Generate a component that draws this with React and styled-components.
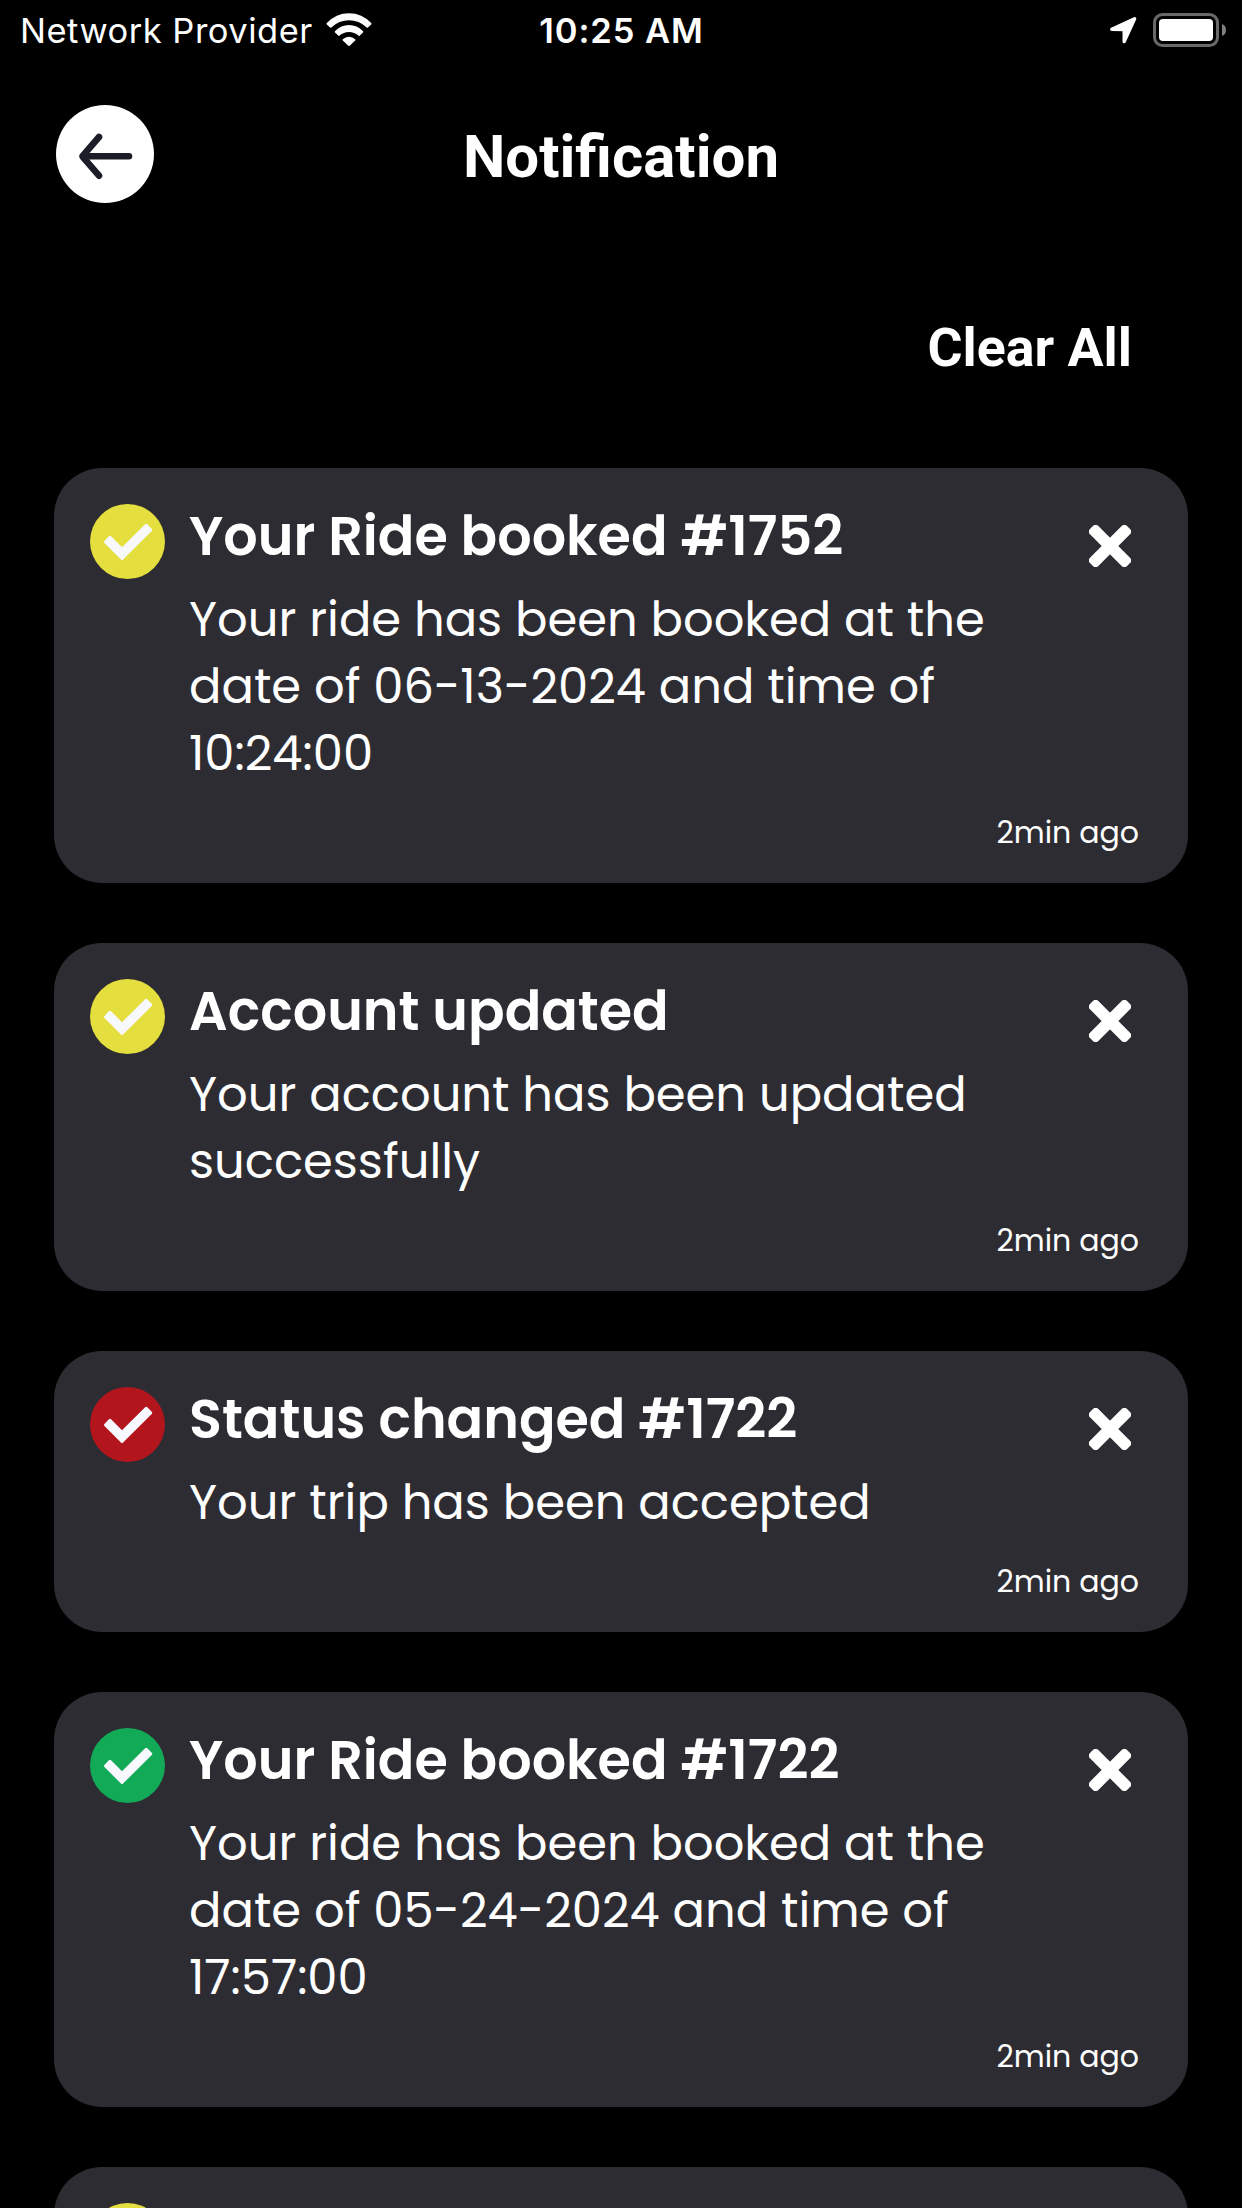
/**
 *
 * NotificationPage
 *
 */

import React from 'react';
import styled, { createGlobalStyle } from 'styled-components';

const GlobalStyle = createGlobalStyle`
  body {
    margin: 0;
    background: #000;
  }
`;

const Wrapper = styled.div`
  display: flex;
  flex-direction: column;
  width: 1242px;
  height: 2208px;
  overflow: hidden;
  background: #000;
  color: #fff;
  font-family: Poppins, Inter, sans-serif;
`;

const StatusBar = styled.div`
  display: grid;
  grid-template-columns: 1fr auto 1fr;
  grid-template-rows: 60px;
  align-items: center;
  flex: none;
  padding: 0 16px 0 20px;
  font-family: Inter, sans-serif;
  font-size: 34.5px;
  line-height: 50px;
`;

const Carrier = styled.div`
  display: flex;
  align-items: center;
  gap: 13px;
  letter-spacing: 0.5px;
`;

const CarrierName = styled.span`
  padding-top: 2px;
`;

const Clock = styled.div`
  padding: 2px 3px 0 0;
  font-weight: 600;
  letter-spacing: 0.9px;
`;

const StatusIcons = styled.div`
  display: flex;
  align-items: center;
  justify-content: flex-end;
  gap: 16px;
`;

const Header = styled.header`
  display: grid;
  grid-template-columns: 98px 1fr 98px;
  align-items: center;
  flex: none;
  margin-top: 45px;
  padding: 0 56px;
`;

const BackButton = styled.button`
  width: 98px;
  height: 98px;
  padding: 0;
  border: 0;
  border-radius: 50%;
  background: #fff;

  svg {
    display: block;
  }
`;

const PageTitle = styled.h1`
  margin: 0;
  padding-top: 5px;
  font-family: Roboto, sans-serif;
  font-size: 60px;
  font-weight: 700;
  line-height: 60px;
  text-align: center;
`;

const ClearAll = styled.button`
  align-self: flex-end;
  flex: none;
  margin: 115px 110px 0 0;
  padding: 0;
  border: 0;
  background: none;
  color: #fff;
  font-family: Roboto, sans-serif;
  font-size: 53.7px;
  font-weight: 700;
  line-height: 60px;
`;

const List = styled.div`
  display: flex;
  flex-direction: column;
  flex: none;
  gap: 60px;
  margin-top: 90px;
  padding: 0 54px;
`;

const Card = styled.article`
  display: flex;
  flex-direction: column;
  box-sizing: border-box;
  min-height: 281px;
  padding: 36px 49px 35px 36px;
  border-radius: 48px;
  background: #2e2c33;
`;

const CardRow = styled.div`
  display: flex;
  align-items: flex-start;
`;

const CardBody = styled.div`
  flex: 1;
  margin-left: 24px;
`;

const Badge = styled.div`
  width: 75px;
  height: 75px;
  border-radius: 50%;
  background: ${props => props.$color};

  svg {
    display: block;
  }
`;

const CardTitle = styled.h2`
  margin: 0;
  font-size: 54px;
  font-weight: 600;
  line-height: 65px;
`;

const Message = styled.p`
  max-width: 830px;
  margin: 17px 0 0;
  font-size: 48px;
  line-height: 67px;
`;

const CloseButton = styled.button`
  flex: none;
  margin: 21px 8px 0 0;
  padding: 0;
  border: 0;
  background: none;

  svg {
    display: block;
  }
`;

const Time = styled.time`
  align-self: flex-end;
  margin-top: 31px;
  font-size: 30px;
  line-height: 30px;
`;

const YELLOW = '#e4de3e';
const RED = '#b3151d';
const GREEN = '#12a957';

const notifications = [
  {
    id: 1,
    color: YELLOW,
    title: 'Your Ride booked #1752',
    message: 'Your ride has been booked at the date of 06-13-2024 and time of 10:24:00',
    time: '2min ago',
  },
  {
    id: 2,
    color: YELLOW,
    title: 'Account updated',
    message: 'Your account has been updated successfully',
    time: '2min ago',
  },
  {
    id: 3,
    color: RED,
    title: 'Status changed #1722',
    message: 'Your trip has been accepted',
    time: '2min ago',
  },
  {
    id: 4,
    color: GREEN,
    title: 'Your Ride booked #1722',
    message: 'Your ride has been booked at the date of 05-24-2024 and time of 17:57:00',
    time: '2min ago',
  },
  { id: 5, color: YELLOW },
];

const WifiIcon = () => (
  <svg width="46" height="34" viewBox="0 0 46 34" fill="#fff">
    <path d="M0.6 10.2Q10 0.3 23 0.3T45.4 10.2Q45.8 10.9 45.2 11.5L41.9 14.6Q41.3 15 40.7 14.5Q33 7.3 23 7.3T5.3 14.5Q4.7 15 4.1 14.6L0.8 11.5Q0.2 10.9 0.6 10.2Z" />
    <path d="M8.9 18.2Q15 12 23 12T37.1 18.2Q37.5 18.9 37 19.4L33.6 22.7Q33 23.1 32.4 22.6Q28.4 19 23 19T13.6 22.6Q13 23.1 12.4 22.7L9 19.4Q8.5 18.9 8.9 18.2Z" />
    <path d="M16.8 26.2Q19.5 23.7 23 23.7T29.2 26.2Q29.8 26.8 29.2 27.4L23.7 32.8Q23 33.4 22.3 32.8L16.8 27.4Q16.2 26.8 16.8 26.2Z" />
  </svg>
);

const LocationIcon = () => (
  <svg width="27" height="27" viewBox="0 0 27 27">
    <path
      d="M1.8 12.2L24.6 1.8L14.2 24.6V12.5Z"
      fill="#fff"
      stroke="#fff"
      strokeWidth="3.4"
      strokeLinejoin="round"
    />
  </svg>
);

const BatteryIcon = () => (
  <svg width="73" height="34" viewBox="0 0 73 34">
    <rect x="1.5" y="1.5" width="63" height="31" rx="8" fill="none" stroke="#696969" strokeWidth="3" />
    <rect x="6" y="6" width="54" height="22" rx="4" fill="#fff" />
    <path d="M69 11Q73 12.5 73 17T69 23Z" fill="#808080" />
  </svg>
);

const BackIcon = () => (
  <svg width="98" height="98" viewBox="0 0 98 98">
    <path
      d="M73 51.3H27M43 32L26.3 51.3L43 70.7"
      fill="none"
      stroke="#1b1d28"
      strokeWidth="6.6"
      strokeLinecap="round"
      strokeLinejoin="round"
    />
  </svg>
);

const CheckIcon = () => (
  <svg width="75" height="75" viewBox="0 0 75 75">
    <path
      d="M15.5 38L20 33.4L32 45.3L56.2 21.4L60.7 25.9L32 54.5Z"
      fill="#f8f9fe"
      stroke="#f8f9fe"
      strokeWidth="3"
      strokeLinejoin="round"
    />
  </svg>
);

const CloseIcon = () => (
  <svg width="42" height="42" viewBox="0 0 42 42" fill="#fff">
    <rect x="-5.2" y="15.1" width="52.4" height="11.8" rx="3.8" transform="rotate(45 21 21)" />
    <rect x="-5.2" y="15.1" width="52.4" height="11.8" rx="3.8" transform="rotate(-45 21 21)" />
  </svg>
);

function NotificationCard({ item }) {
  return (
    <Card>
      <CardRow>
        <Badge $color={item.color}>
          <CheckIcon />
        </Badge>
        <CardBody>
          {item.title && <CardTitle>{item.title}</CardTitle>}
          {item.message && <Message>{item.message}</Message>}
        </CardBody>
        <CloseButton aria-label="Remove">
          <CloseIcon />
        </CloseButton>
      </CardRow>
      {item.time && <Time>{item.time}</Time>}
    </Card>
  );
}

export default function NotificationPage() {
  return (
    <Wrapper>
      <GlobalStyle />
      <StatusBar>
        <Carrier>
          <CarrierName>Network Provider</CarrierName>
          <WifiIcon />
        </Carrier>
        <Clock>10:25 AM</Clock>
        <StatusIcons>
          <LocationIcon />
          <BatteryIcon />
        </StatusIcons>
      </StatusBar>

      <Header>
        <BackButton aria-label="Back">
          <BackIcon />
        </BackButton>
        <PageTitle>Notification</PageTitle>
      </Header>

      <ClearAll>Clear All</ClearAll>

      <List>
        {notifications.map(item => (
          <NotificationCard key={item.id} item={item} />
        ))}
      </List>
    </Wrapper>
  );
}
